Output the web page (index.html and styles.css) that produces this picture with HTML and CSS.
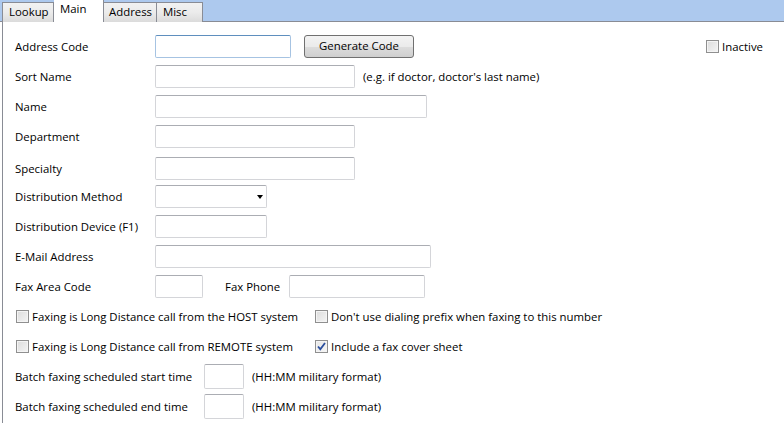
FILE: index.html
```html
<!DOCTYPE html>
<html lang="en">
  <head>
    <meta charset="UTF-8" />
    <title>Address - Main</title>
    <link rel="stylesheet" href="styles.css">
  </head>
  <body>
    <div class="tabs">
      <div class="tab t52">Lookup</div>
      <div class="tab active">Main</div>
      <div class="tab t53">Address</div>
      <div class="tab t46">Misc</div>
    </div>
    <div class="panel">
      <div class="row">
        <span class="label">Address Code</span>
        <span class="field focus w136"></span>
        <span class="btn">Generate Code</span>
        <span class="check right"><span class="box"></span>Inactive</span>
      </div>
      <div class="row">
        <span class="label">Sort Name</span>
        <span class="field w200"></span>
        <span class="hint">(e.g. if doctor, doctor's last name)</span>
      </div>
      <div class="row">
        <span class="label">Name</span>
        <span class="field w272"></span>
      </div>
      <div class="row">
        <span class="label">Department</span>
        <span class="field w200"></span>
      </div>
      <div class="row shift">
        <span class="label">Specialty</span>
        <span class="field w200"></span>
      </div>
      <div class="row">
        <span class="label">Distribution Method</span>
        <span class="field select w112"><span class="arrow"></span></span>
      </div>
      <div class="row">
        <span class="label">Distribution Device (F1)</span>
        <span class="field w112"></span>
      </div>
      <div class="row">
        <span class="label">E-Mail Address</span>
        <span class="field w276"></span>
      </div>
      <div class="row">
        <span class="label">Fax Area Code</span>
        <span class="field w48"></span>
        <span class="label sub">Fax Phone</span>
        <span class="field w136"></span>
      </div>
      <div class="row checks">
        <span class="check col"><span class="box"></span>Faxing is Long Distance call from the HOST system</span>
        <span class="check"><span class="box"></span>Don't use dialing prefix when faxing to this number</span>
      </div>
      <div class="row checks">
        <span class="check col"><span class="box"></span>Faxing is Long Distance call from REMOTE system</span>
        <span class="check"><span class="box checked"><svg width="11" height="11" viewBox="0 0 11 11"><path d="M2 5.5 L4.3 8.2 L9 2" fill="none" stroke="#2b4f9e" stroke-width="1.8"/></svg></span>Include a fax cover sheet</span>
      </div>
      <div class="row time">
        <span class="label wide">Batch faxing scheduled start time</span>
        <span class="field w40 tall"></span>
        <span class="hint">(HH:MM military format)</span>
      </div>
      <div class="row time">
        <span class="label wide">Batch faxing scheduled end time</span>
        <span class="field w40 tall"></span>
        <span class="hint">(HH:MM military format)</span>
      </div>
    </div>
  </body>
</html>
```
FILE: styles.css
```css
* {
  margin: 0;
  padding: 0;
  box-sizing: border-box;
}
body {
  width: 784px;
  height: 423px;
  overflow: hidden;
  background-color: #fff;
  font-family: "Open Sans", "Noto Sans", sans-serif;
  font-size: 11.4px;
  color: #000;
}
.tabs {
  display: flex;
  align-items: flex-end;
  height: 22px;
  padding-left: 2px;
  background-color: #adc9ee;
  border-bottom: 1px solid #898c95;
}
.tab {
  height: 20px;
  padding: 0 0 0 6px;
  line-height: 18px;
  margin-bottom: -1px;
  border: 1px solid #898c95;
  border-bottom: none;
  border-left: none;
  background: linear-gradient(#f2f2f2, #ebebeb 50%, #dbdbdb);
}
.t52 { width: 52px; }
.t53 { width: 53px; padding-left: 5px; }
.t46 { width: 46px; }
.tab:first-child {
  border-left: 1px solid #898c95;
}
.tab.active {
  height: 23px;
  width: 50px;
  line-height: 18px;
  padding: 0 6px;
  background: #fff;
  border-color: #fff;
  border-bottom: none;
  border-right: 1px solid #898c95;
}
.panel {
  height: 401px;
  margin-left: 2px;
  border-left: 1px solid #898c95;
  padding: 9px 21px 0 12px;
}
.row {
  display: flex;
  align-items: center;
  height: 30px;
}
.row.shift {
  margin-top: 2px;
  margin-bottom: -2px;
}
.label {
  width: 140px;
  flex: none;
}
.label.wide {
  width: 189px;
}
.label.sub {
  width: 64px;
  margin-left: 22px;
}
.field {
  display: block;
  flex: none;
  height: 23px;
  border: 1px solid #d4d5d9;
  border-top-color: #abadb3;
  border-radius: 2px;
  background: #fff;
}
.field.focus {
  border-color: #a6c3e2;
  border-top-color: #5f8fbe;
}
.field.tall {
  height: 25px;
}
.w40 { width: 40px; }
.w48 { width: 48px; }
.w112 { width: 112px; }
.w136 { width: 136px; }
.w200 { width: 200px; }
.w272 { width: 272px; }
.w276 { width: 276px; }
.select {
  position: relative;
}
.arrow {
  position: absolute;
  right: 3px;
  top: 9px;
  border-left: 3.5px solid transparent;
  border-right: 3.5px solid transparent;
  border-top: 4px solid #000;
}
.hint {
  margin-left: 8px;
}
.btn {
  width: 110px;
  height: 23px;
  margin-left: 13px;
  line-height: 20px;
  text-align: center;
  border: 1px solid #707070;
  border-radius: 3px;
  background: linear-gradient(#f3f3f3, #ebebeb 50%, #dddddd 51%, #cfcfcf);
}
.check {
  display: flex;
  align-items: center;
}
.check.right {
  margin-left: auto;
}
.check.col {
  width: 299px;
}
.checks {
  padding-left: 1px;
}
.box {
  display: block;
  width: 13px;
  height: 13px;
  margin-right: 3px;
  border: 1px solid #8f8f8f;
  background: linear-gradient(135deg, #dcdcdc, #f4f4f4);
  box-shadow: inset 0 0 0 1px #f4f4f4;
}
.box.checked {
  padding: 0;
  background: linear-gradient(135deg, #e6e6e6, #f6f6f6);
}
.box.checked svg {
  display: block;
}
```
